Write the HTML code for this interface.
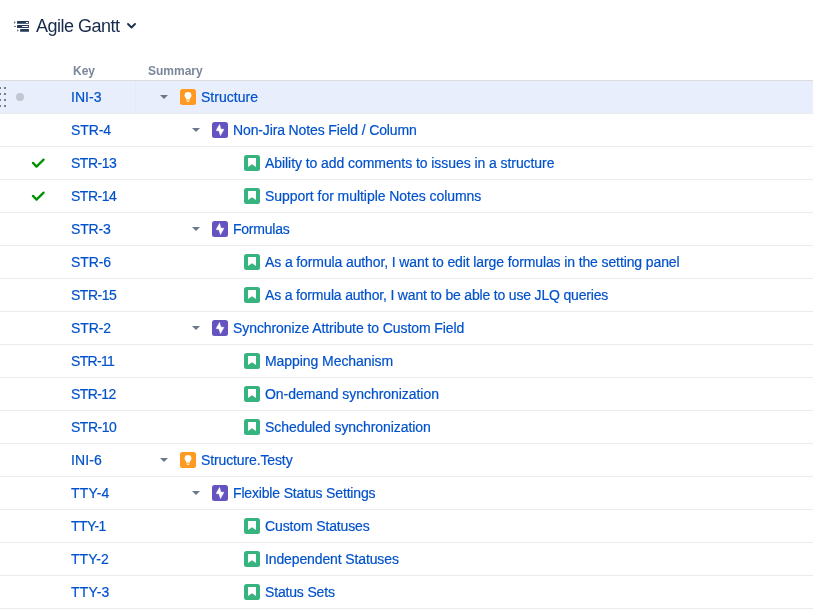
<!DOCTYPE html>
<html><head><meta charset="utf-8"><style>
html,body{margin:0;padding:0;}
body{width:813px;height:609px;overflow:hidden;background:#fff;position:relative;font-family:"Liberation Sans",sans-serif;}
.key,.sum{-webkit-text-stroke:0.2px currentColor;}
.wrap{position:absolute;left:0;top:0;width:813px;height:609px;will-change:transform;}
.title{position:absolute;left:36px;top:15px;font-size:18px;letter-spacing:-0.5px;line-height:22px;color:#172b4d;white-space:nowrap;}
.ticon{position:absolute;left:14px;top:19px;}
.chev{position:absolute;left:127px;top:23px;}
.hdr{position:absolute;top:64px;font-size:12px;font-weight:bold;color:#7a869a;line-height:14px;}
.hline{position:absolute;left:0;top:80px;width:813px;height:1px;background:#dcdcdc;}
.row{position:absolute;left:0;width:813px;height:32px;border-bottom:1px solid #ebebeb;}
.row.sel{background:#e8eefb;}
.key{position:absolute;left:71px;top:8px;font-size:14px;letter-spacing:-0.2px;line-height:16px;color:#0052cc;white-space:nowrap;}
.sum{position:absolute;top:8px;font-size:14px;letter-spacing:-0.08px;line-height:16px;color:#0052cc;white-space:nowrap;}
.trw{position:absolute;top:14px;width:8px;height:4px;}
.trw svg,.icw svg,.chk{display:block;}
.icw{position:absolute;top:8px;width:16px;height:16px;}
.chk{position:absolute;left:31px;top:10px;}
.cband{position:absolute;left:127px;top:0;width:8px;height:32px;background:rgba(255,255,255,0.12);border-right:1px solid rgba(0,0,60,0.025);}
.gd{position:absolute;width:2px;height:2px;background:#737f93;}
.dot{position:absolute;left:16px;top:12px;width:8px;height:8px;border-radius:50%;background:#c1c7d0;}
</style></head><body><div class="wrap">
<svg class="ticon" width="16" height="14" viewBox="0 0 16 14"><g fill="#5e6c84"><path d="M0 2 L1.8 3.4 L0 4.8Z"/><rect x="0" y="6.9" width="1.9" height="1" /><path d="M3.1 10.2 L4.8 11.5 L3.1 12.8Z"/></g><g fill="#253858"><rect x="3" y="2" width="12" height="2.8" rx="0.6"/><rect x="3" y="6.1" width="12" height="2.8" rx="0.6"/><rect x="6.1" y="10" width="8.9" height="2.8" rx="0.6"/></g><rect x="11.8" y="2.9" width="2.4" height="1.1" rx="0.5" fill="#fff"/><rect x="7.9" y="6.9" width="6.3" height="1" rx="0.5" fill="#fff"/></svg>
<div class="title">Agile Gantt</div>
<svg class="chev" width="9" height="6" viewBox="0 0 9 6"><path d="M1 1 L4.5 4.5 L8 1" fill="none" stroke="#172b4d" stroke-width="1.8" stroke-linecap="round" stroke-linejoin="round"/></svg>
<div class="hdr" style="left:73px">Key</div>
<div class="hdr" style="left:148px">Summary</div>
<div class="hline"></div>
<div class="row sel" style="top:81px"><div class="gd" style="left:-1px;top:6px"></div><div class="gd" style="left:-1px;top:12px"></div><div class="gd" style="left:-1px;top:18px"></div><div class="gd" style="left:-1px;top:24px"></div><div class="gd" style="left:4px;top:6px"></div><div class="gd" style="left:4px;top:12px"></div><div class="gd" style="left:4px;top:18px"></div><div class="gd" style="left:4px;top:24px"></div><div class="dot"></div><div class="cband"></div><span class="key" style="letter-spacing:0.060px">INI-3</span><span class="trw" style="left:160px"><svg class="tri" width="8" height="4" viewBox="0 0 8 4"><path d="M0 0 H8 L4 4 Z" fill="#6b778c"/></svg></span><span class="icw" style="left:180px"><svg class="ic" width="16" height="16" viewBox="0 0 16 16"><rect width="16" height="16" rx="2.5" fill="#ff991f"/><circle cx="8" cy="6.3" r="3.4" fill="#fff"/><rect x="6" y="8.5" width="4" height="2" fill="#fff"/><rect x="6" y="10.6" width="4" height="0.9" fill="#ffd6a0"/><ellipse cx="8" cy="12.3" rx="1.4" ry="0.6" fill="#fff"/></svg></span><span class="sum" style="left:201px;letter-spacing:0.020px">Structure</span></div><div class="row" style="top:114px"><span class="key" style="letter-spacing:-0.120px">STR-4</span><span class="trw" style="left:192px"><svg class="tri" width="8" height="4" viewBox="0 0 8 4"><path d="M0 0 H8 L4 4 Z" fill="#6b778c"/></svg></span><span class="icw" style="left:212px"><svg class="ic" width="16" height="16" viewBox="0 0 16 16"><rect width="16" height="16" rx="2.5" fill="#6554c0"/><path d="M7.6 2.3 L4.0 8.6 L6.9 8.9 L8.4 13.8 L12.1 7.3 L8.9 6.9 Z" fill="#fff" stroke="#fff" stroke-width="0.3" stroke-linejoin="round"/></svg></span><span class="sum" style="left:233px;letter-spacing:-0.132px">Non-Jira Notes Field / Column</span></div><div class="row" style="top:147px"><svg class="chk" width="15" height="14" viewBox="0 0 15 14"><path d="M2 5.9 L5.5 9.6 L12.6 2.6" fill="none" stroke="#009100" stroke-width="2.3" stroke-linecap="round" stroke-linejoin="round"/></svg><span class="key" style="letter-spacing:-0.504px">STR-13</span><span class="icw" style="left:244px"><svg class="ic" width="16" height="16" viewBox="0 0 16 16"><rect width="16" height="16" rx="2.5" fill="#36b37e"/><path d="M4 3 H12 V12 L8 9.2 L4 12 Z" fill="#fff"/></svg></span><span class="sum" style="left:265px;letter-spacing:-0.066px">Ability to add comments to issues in a structure</span></div><div class="row" style="top:180px"><svg class="chk" width="15" height="14" viewBox="0 0 15 14"><path d="M2 5.9 L5.5 9.6 L12.6 2.6" fill="none" stroke="#009100" stroke-width="2.3" stroke-linecap="round" stroke-linejoin="round"/></svg><span class="key" style="letter-spacing:-0.504px">STR-14</span><span class="icw" style="left:244px"><svg class="ic" width="16" height="16" viewBox="0 0 16 16"><rect width="16" height="16" rx="2.5" fill="#36b37e"/><path d="M4 3 H12 V12 L8 9.2 L4 12 Z" fill="#fff"/></svg></span><span class="sum" style="left:265px;letter-spacing:-0.047px">Support for multiple Notes columns</span></div><div class="row" style="top:213px"><span class="key" style="letter-spacing:-0.160px">STR-3</span><span class="trw" style="left:192px"><svg class="tri" width="8" height="4" viewBox="0 0 8 4"><path d="M0 0 H8 L4 4 Z" fill="#6b778c"/></svg></span><span class="icw" style="left:212px"><svg class="ic" width="16" height="16" viewBox="0 0 16 16"><rect width="16" height="16" rx="2.5" fill="#6554c0"/><path d="M7.6 2.3 L4.0 8.6 L6.9 8.9 L8.4 13.8 L12.1 7.3 L8.9 6.9 Z" fill="#fff" stroke="#fff" stroke-width="0.3" stroke-linejoin="round"/></svg></span><span class="sum" style="left:233px;letter-spacing:-0.234px">Formulas</span></div><div class="row" style="top:246px"><span class="key" style="letter-spacing:-0.120px">STR-6</span><span class="icw" style="left:244px"><svg class="ic" width="16" height="16" viewBox="0 0 16 16"><rect width="16" height="16" rx="2.5" fill="#36b37e"/><path d="M4 3 H12 V12 L8 9.2 L4 12 Z" fill="#fff"/></svg></span><span class="sum" style="left:265px;letter-spacing:-0.114px">As a formula author, I want to edit large formulas in the setting panel</span></div><div class="row" style="top:279px"><span class="key" style="letter-spacing:-0.488px">STR-15</span><span class="icw" style="left:244px"><svg class="ic" width="16" height="16" viewBox="0 0 16 16"><rect width="16" height="16" rx="2.5" fill="#36b37e"/><path d="M4 3 H12 V12 L8 9.2 L4 12 Z" fill="#fff"/></svg></span><span class="sum" style="left:265px;letter-spacing:-0.179px">As a formula author, I want to be able to use JLQ queries</span></div><div class="row" style="top:312px"><span class="key" style="letter-spacing:-0.120px">STR-2</span><span class="trw" style="left:192px"><svg class="tri" width="8" height="4" viewBox="0 0 8 4"><path d="M0 0 H8 L4 4 Z" fill="#6b778c"/></svg></span><span class="icw" style="left:212px"><svg class="ic" width="16" height="16" viewBox="0 0 16 16"><rect width="16" height="16" rx="2.5" fill="#6554c0"/><path d="M7.6 2.3 L4.0 8.6 L6.9 8.9 L8.4 13.8 L12.1 7.3 L8.9 6.9 Z" fill="#fff" stroke="#fff" stroke-width="0.3" stroke-linejoin="round"/></svg></span><span class="sum" style="left:233px;letter-spacing:-0.080px">Synchronize Attribute to Custom Field</span></div><div class="row" style="top:345px"><span class="key" style="letter-spacing:-0.696px">STR-11</span><span class="icw" style="left:244px"><svg class="ic" width="16" height="16" viewBox="0 0 16 16"><rect width="16" height="16" rx="2.5" fill="#36b37e"/><path d="M4 3 H12 V12 L8 9.2 L4 12 Z" fill="#fff"/></svg></span><span class="sum" style="left:265px;letter-spacing:-0.063px">Mapping Mechanism</span></div><div class="row" style="top:378px"><span class="key" style="letter-spacing:-0.584px">STR-12</span><span class="icw" style="left:244px"><svg class="ic" width="16" height="16" viewBox="0 0 16 16"><rect width="16" height="16" rx="2.5" fill="#36b37e"/><path d="M4 3 H12 V12 L8 9.2 L4 12 Z" fill="#fff"/></svg></span><span class="sum" style="left:265px;letter-spacing:-0.048px">On-demand synchronization</span></div><div class="row" style="top:411px"><span class="key" style="letter-spacing:-0.504px">STR-10</span><span class="icw" style="left:244px"><svg class="ic" width="16" height="16" viewBox="0 0 16 16"><rect width="16" height="16" rx="2.5" fill="#36b37e"/><path d="M4 3 H12 V12 L8 9.2 L4 12 Z" fill="#fff"/></svg></span><span class="sum" style="left:265px;letter-spacing:-0.061px">Scheduled synchronization</span></div><div class="row" style="top:444px"><span class="key" style="letter-spacing:0.100px">INI-6</span><span class="trw" style="left:160px"><svg class="tri" width="8" height="4" viewBox="0 0 8 4"><path d="M0 0 H8 L4 4 Z" fill="#6b778c"/></svg></span><span class="icw" style="left:180px"><svg class="ic" width="16" height="16" viewBox="0 0 16 16"><rect width="16" height="16" rx="2.5" fill="#ff991f"/><circle cx="8" cy="6.3" r="3.4" fill="#fff"/><rect x="6" y="8.5" width="4" height="2" fill="#fff"/><rect x="6" y="10.6" width="4" height="0.9" fill="#ffd6a0"/><ellipse cx="8" cy="12.3" rx="1.4" ry="0.6" fill="#fff"/></svg></span><span class="sum" style="left:201px;letter-spacing:-0.124px">Structure.Testy</span></div><div class="row" style="top:477px"><span class="key" style="letter-spacing:0.180px">TTY-4</span><span class="trw" style="left:192px"><svg class="tri" width="8" height="4" viewBox="0 0 8 4"><path d="M0 0 H8 L4 4 Z" fill="#6b778c"/></svg></span><span class="icw" style="left:212px"><svg class="ic" width="16" height="16" viewBox="0 0 16 16"><rect width="16" height="16" rx="2.5" fill="#6554c0"/><path d="M7.6 2.3 L4.0 8.6 L6.9 8.9 L8.4 13.8 L12.1 7.3 L8.9 6.9 Z" fill="#fff" stroke="#fff" stroke-width="0.3" stroke-linejoin="round"/></svg></span><span class="sum" style="left:233px;letter-spacing:-0.162px">Flexible Status Settings</span></div><div class="row" style="top:510px"><span class="key" style="letter-spacing:-0.560px">TTY-1</span><span class="icw" style="left:244px"><svg class="ic" width="16" height="16" viewBox="0 0 16 16"><rect width="16" height="16" rx="2.5" fill="#36b37e"/><path d="M4 3 H12 V12 L8 9.2 L4 12 Z" fill="#fff"/></svg></span><span class="sum" style="left:265px;letter-spacing:-0.131px">Custom Statuses</span></div><div class="row" style="top:543px"><span class="key" style="letter-spacing:0.060px">TTY-2</span><span class="icw" style="left:244px"><svg class="ic" width="16" height="16" viewBox="0 0 16 16"><rect width="16" height="16" rx="2.5" fill="#36b37e"/><path d="M4 3 H12 V12 L8 9.2 L4 12 Z" fill="#fff"/></svg></span><span class="sum" style="left:265px;letter-spacing:-0.122px">Independent Statuses</span></div><div class="row" style="top:576px"><span class="key" style="letter-spacing:0.180px">TTY-3</span><span class="icw" style="left:244px"><svg class="ic" width="16" height="16" viewBox="0 0 16 16"><rect width="16" height="16" rx="2.5" fill="#36b37e"/><path d="M4 3 H12 V12 L8 9.2 L4 12 Z" fill="#fff"/></svg></span><span class="sum" style="left:265px;letter-spacing:-0.166px">Status Sets</span></div>
</div></body></html>
